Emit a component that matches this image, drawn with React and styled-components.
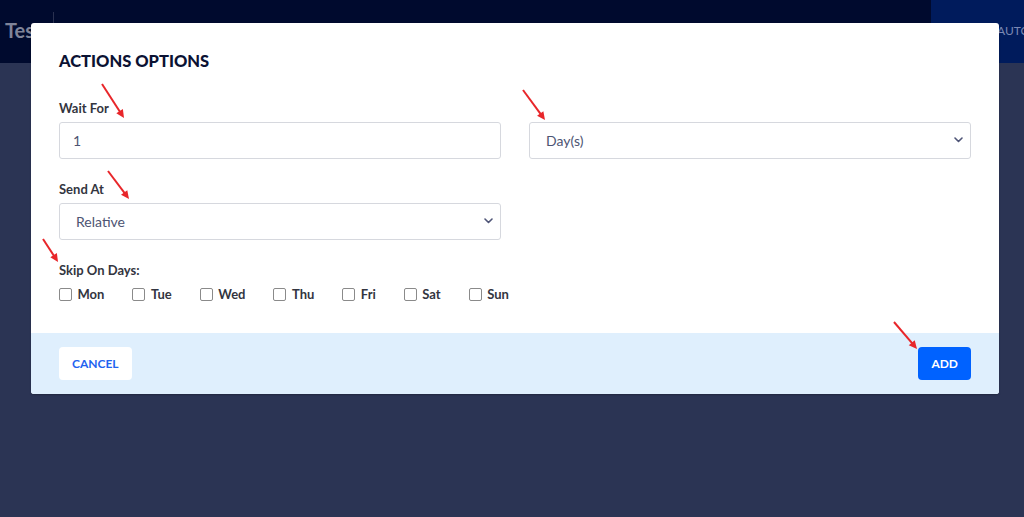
import React, { useState } from "react";
import styled, { createGlobalStyle } from "styled-components";

const GlobalStyle = createGlobalStyle`
  html, body {
    margin: 0;
    padding: 0;
    height: 100%;
    overflow: hidden;
  }
  body {
    font-family: Lato, "Liberation Sans", sans-serif;
    background: #2b3454;
  }
  * {
    box-sizing: border-box;
  }
`;

const days = ["Mon", "Tue", "Wed", "Thu", "Fri", "Sat", "Sun"];

// red annotation arrows drawn over the screenshot
const arrows = [
  [102, 84, 124, 118],
  [523, 90, 545, 120],
  [108, 171, 129, 199],
  [43, 239, 58, 262],
  [894, 322, 917, 349],
];

const Chevron = () => (
  <svg width="9" height="6" viewBox="0 0 9 6">
    <path
      d="M1 1 L4.5 4.5 L8 1"
      fill="none"
      stroke="#4f5577"
      strokeWidth="1.6"
      strokeLinecap="round"
      strokeLinejoin="round"
    />
  </svg>
);

const Arrow = ({ x1, y1, x2, y2 }) => {
  const ang = Math.atan2(y2 - y1, x2 - x1);
  const len = 9;
  const spread = 0.45;
  const ax = x2 - len * Math.cos(ang - spread);
  const ay = y2 - len * Math.sin(ang - spread);
  const bx = x2 - len * Math.cos(ang + spread);
  const by = y2 - len * Math.sin(ang + spread);
  const lx = x2 - 6 * Math.cos(ang);
  const ly = y2 - 6 * Math.sin(ang);
  return (
    <g>
      <line x1={x1} y1={y1} x2={lx} y2={ly} stroke="#e8262a" strokeWidth="2" />
      <polygon points={`${x2},${y2} ${ax},${ay} ${bx},${by}`} fill="#e8262a" />
    </g>
  );
};

const App = () => {
  const [waitFor, setWaitFor] = useState("1");
  const [unit, setUnit] = useState("days");
  const [sendAt, setSendAt] = useState("relative");
  const [skip, setSkip] = useState({});

  return (
    <Page>
      <GlobalStyle />
      <TopBar>
        <Brand>Tes</Brand>
        <Divider />
        <Spacer />
        <NavTab>AUTO</NavTab>
      </TopBar>

      <Overlay>
        <Modal>
          <Body>
            <Title>ACTIONS OPTIONS</Title>
            <Row>
              <Field>
                <Label>Wait For</Label>
                <Input
                  type="text"
                  value={waitFor}
                  onChange={(e) => setWaitFor(e.target.value)}
                />
              </Field>
              <Field>
                <Label $hidden>Unit</Label>
                <SelectWrap>
                  <Select value={unit} onChange={(e) => setUnit(e.target.value)}>
                    <option value="days">Day(s)</option>
                    <option value="hours">Hour(s)</option>
                    <option value="minutes">Minute(s)</option>
                  </Select>
                  <ChevronSpot>
                    <Chevron />
                  </ChevronSpot>
                </SelectWrap>
              </Field>
            </Row>
            <Row>
              <Field>
                <Label>Send At</Label>
                <SelectWrap>
                  <Select
                    value={sendAt}
                    onChange={(e) => setSendAt(e.target.value)}
                  >
                    <option value="relative">Relative</option>
                    <option value="exact">Exact Time</option>
                  </Select>
                  <ChevronSpot>
                    <Chevron />
                  </ChevronSpot>
                </SelectWrap>
              </Field>
              <Field />
            </Row>
            <Label>Skip On Days:</Label>
            <Days>
              {days.map((d) => (
                <DayOption key={d}>
                  <Check
                    type="checkbox"
                    checked={!!skip[d]}
                    onChange={() => setSkip((s) => ({ ...s, [d]: !s[d] }))}
                  />
                  {d}
                </DayOption>
              ))}
            </Days>
          </Body>
          <Footer>
            <Button>CANCEL</Button>
            <Button $primary>ADD</Button>
          </Footer>
        </Modal>
      </Overlay>

      <Annotations width="1024" height="517" viewBox="0 0 1024 517">
        {arrows.map(([x1, y1, x2, y2], i) => (
          <Arrow key={i} x1={x1} y1={y1} x2={x2} y2={y2} />
        ))}
      </Annotations>
    </Page>
  );
};

const Page = styled.div`
  position: relative;
  width: 100vw;
  height: 100vh;
  background: #2b3454;
  overflow: hidden;
`;

const TopBar = styled.header`
  height: 63px;
  display: flex;
  align-items: stretch;
  background: #000a2e;
`;

const Brand = styled.div`
  display: flex;
  align-items: center;
  width: 53px;
  padding: 0 0 3px 5px;
  font-size: 20px;
  font-weight: 700;
  color: #7f8499;
`;

const Divider = styled.div`
  width: 1px;
  height: 28px;
  margin-top: 12px;
  background: #2a3150;
`;

const Spacer = styled.div`
  flex: 1;
`;

const NavTab = styled.div`
  width: 93px;
  display: flex;
  align-items: center;
  padding-left: 66px;
  padding-bottom: 2px;
  background: #001b5c;
  color: #7b88b3;
  font-size: 12px;
  white-space: nowrap;
  overflow: hidden;
`;

const Overlay = styled.div`
  position: absolute;
  inset: 0;
  padding: 23px 0 0 31px;
`;

const Modal = styled.div`
  width: 968px;
  background: #fff;
  border-radius: 3px;
  overflow: hidden;
  box-shadow: 0 1px 2px rgba(0, 0, 0, 0.25);
`;

const Body = styled.div`
  padding: 28px 28px 30px;
`;

const Title = styled.h2`
  margin: 0 0 28px;
  font-size: 16.5px;
  line-height: 20px;
  font-weight: 900;
  color: #0b1233;
`;

const Row = styled.div`
  display: grid;
  grid-template-columns: 1fr 1fr;
  column-gap: 28px;
  margin-bottom: 21px;
`;

const Field = styled.div`
  display: flex;
  flex-direction: column;
`;

const Label = styled.label`
  display: block;
  font-size: 13px;
  line-height: 18px;
  font-weight: 700;
  color: #333540;
  margin-bottom: 5px;
  visibility: ${(p) => (p.$hidden ? "hidden" : "visible")};
`;

const Input = styled.input`
  height: 37px;
  width: 100%;
  padding: 0 13px;
  border: 1px solid #d6d8de;
  border-radius: 3px;
  font-family: Lato, "Liberation Sans", sans-serif;
  font-size: 14px;
  color: #4d5472;
  outline: none;
`;

const SelectWrap = styled.div`
  position: relative;
`;

const Select = styled.select`
  appearance: none;
  -webkit-appearance: none;
  height: 37px;
  width: 100%;
  padding: 0 16px;
  border: 1px solid #d6d8de;
  border-radius: 3px;
  background: #fff;
  font-family: Lato, "Liberation Sans", sans-serif;
  font-size: 14px;
  color: #4d5472;
  outline: none;
`;

const ChevronSpot = styled.span`
  position: absolute;
  right: 8px;
  top: 15px;
  display: flex;
  pointer-events: none;
`;

const Days = styled.div`
  display: flex;
  gap: 28px;
  margin-top: 6px;
`;

const DayOption = styled.label`
  display: flex;
  align-items: center;
  gap: 5.5px;
  font-size: 13px;
  line-height: 18px;
  font-weight: 700;
  color: #333540;
`;

const Check = styled.input`
  appearance: none;
  -webkit-appearance: none;
  width: 13px;
  height: 13px;
  margin: 0;
  border: 1px solid #8a8a8a;
  border-radius: 2px;
  background: #fff;
  &:checked {
    background: #0062ff;
    border-color: #0062ff;
  }
`;

const Footer = styled.div`
  height: 61px;
  display: flex;
  align-items: center;
  justify-content: space-between;
  padding: 0 28px;
  background: #dfeffd;
`;

const Button = styled.button`
  height: 33px;
  padding: 0 13px;
  border: none;
  border-radius: 4px;
  background: ${(p) => (p.$primary ? "#0062ff" : "#fff")};
  color: ${(p) => (p.$primary ? "#fff" : "#1f63f0")};
  font-family: Lato, "Liberation Sans", sans-serif;
  font-size: 12px;
  font-weight: 700;
  cursor: pointer;
`;

const Annotations = styled.svg`
  position: absolute;
  left: 0;
  top: 0;
  pointer-events: none;
`;

export default App;
